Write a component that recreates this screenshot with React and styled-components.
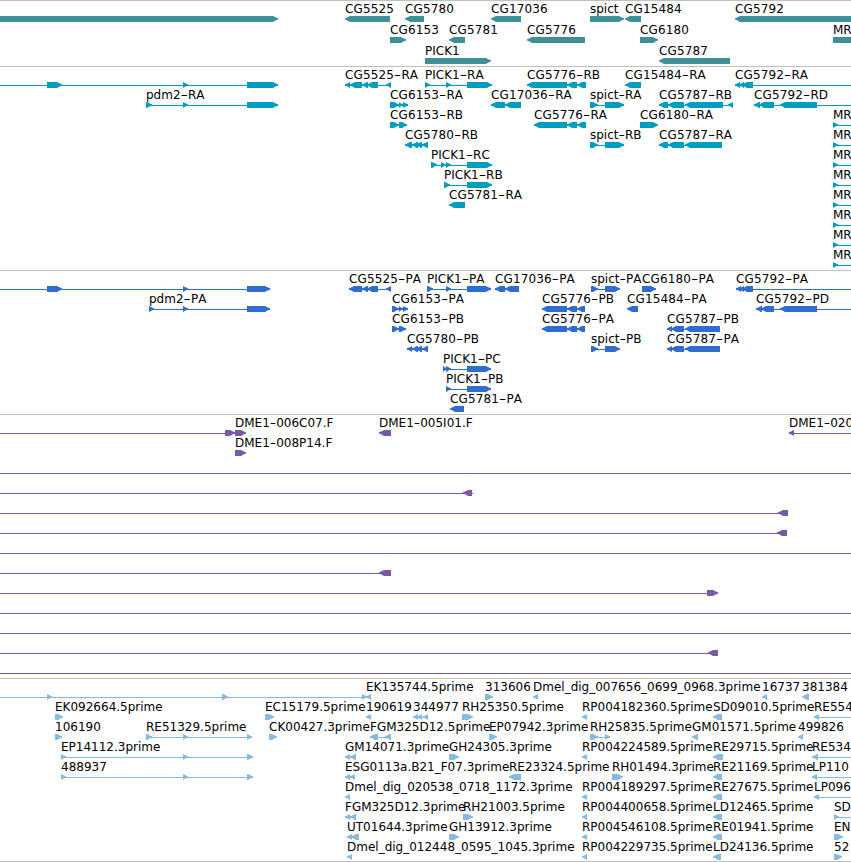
import React from 'react';
import styled, { createGlobalStyle } from 'styled-components';

const GlobalStyle = createGlobalStyle`
  body {
    margin: 0;
    background: #fff;
    overflow: hidden;
  }
`;

const Browser = styled.main`
  display: flex;
  flex-direction: column;
  width: 851px;
  overflow: hidden;
  border-bottom: 1px solid #c0c0c0;
`;

const Track = styled.section`
  display: flex;
  flex-direction: column;
  padding-bottom: ${props => props.$gap}px;
  border-top: 1px solid #c0c0c0;
  color: ${props => props.$color};
`;

const Lane = styled.svg`
  display: block;
  width: 100%;
  height: ${props => props.$height}px;
  overflow: visible;
`;

const Label = styled.text`
  fill: #000;
  font-family: 'DejaVu Sans', sans-serif;
  font-size: 12px;
  font-kerning: none;
  letter-spacing: ${props => props.$tracking}px;
`;

const Intron = styled.rect`
  fill: currentColor;
  shape-rendering: crispEdges;
`;

const Exon = styled.polygon`
  fill: currentColor;
`;

const END = 860;

// forward / reverse strand feature: label, exon ranges, optional intron line range
const fwd = (label, exons, line) => ({ label, exons, line, strand: 1 });
const rev = (label, exons, line) => ({ label, exons, line, strand: -1 });
const span = () => fwd('', [], [-10, END]);

const mr = () => fwd('MR', [[833, 838]], [833, END]);
const spict = (label, a, b) => fwd(label, [[a, 598], [605, b]], [a, b]);
const rp = label => rev(label, [[582, 587]]);

const tracks = [
  {
    name: 'genes',
    color: '#3f8f96',
    laneHeight: 21,
    gap: 2,
    lanes: [
      [
        fwd('', [[-10, 278]]),
        rev('CG5525', [[345, 390]]),
        rev('CG5780', [[405, 424]]),
        rev('CG17036', [[491, 521]]),
        fwd('spict', [[590, 624]]),
        rev('CG15484', [[625, 641]]),
        rev('CG5792', [[735, END]]),
      ],
      [
        fwd('CG6153', [[390, 406]]),
        rev('CG5781', [[449, 465]]),
        rev('CG5776', [[527, 585]]),
        fwd('CG6180', [[640, 658]]),
        fwd('MR', [[833, END]]),
      ],
      [fwd('PICK1', [[425, 491]]), rev('CG5787', [[659, 730]])],
    ],
  },
  {
    name: 'transcripts',
    color: '#009dc0',
    laneHeight: 20,
    gap: 3,
    lanes: [
      [
        fwd('', [[47, 62], [183, 188], [247, 278]], [-10, 278]),
        rev('CG5525-RA', [[345, 350], [350, 362], [362, 368], [367, 378], [386, 391]], [345, 391]),
        fwd('PICK1-RA', [[425, 430], [446, 451], [467, 492]], [425, 492]),
        rev('CG5776-RB', [[527, 567], [567, 577], [577, 586]], [527, 586]),
        rev('CG15484-RA', [[625, 641]]),
        rev('CG5792-RA', [[735, 740], [739, 744], [742, 753]], [735, END]),
      ],
      [
        fwd('pdm2-RA', [[146, 152], [183, 188], [247, 278]], [146, 278]),
        fwd('CG6153-RA', [[390, 399], [399, 403], [403, 408]], [390, 408]),
        rev('CG17036-RA', [[491, 505], [505, 521]], [491, 521]),
        spict('spict-RA', 590, 624),
        rev('CG5787-RB', [[659, 668], [668, 684], [685, 723], [728, 733]], [659, 733]),
        rev('CG5792-RD', [[754, 760], [759, 774], [780, 817]], [754, END]),
      ],
      [
        fwd('CG6153-RB', [[390, 399], [399, 407]], [390, 407]),
        rev('CG5776-RA', [[534, 567], [567, 577], [577, 586]], [534, 586]),
        fwd('CG6180-RA', [[640, 658]]),
        mr(),
      ],
      [
        rev('CG5780-RB', [[405, 412], [412, 418], [416, 422], [422, 428]], [405, 428]),
        spict('spict-RB', 590, 624),
        rev('CG5787-RA', [[659, 668], [668, 684], [685, 722]], [659, 722]),
        mr(),
      ],
      [fwd('PICK1-RC', [[431, 437], [441, 446], [446, 451], [467, 492]], [431, 492]), mr()],
      [fwd('PICK1-RB', [[444, 450], [467, 492]], [444, 492]), mr()],
      [rev('CG5781-RA', [[449, 465]]), mr()],
      [mr()],
      [mr()],
      [mr()],
    ],
  },
  {
    name: 'proteins',
    color: '#306ccf',
    laneHeight: 20,
    gap: 3,
    lanes: [
      [
        fwd('', [[47, 62], [183, 188], [247, 270]], [-10, 270]),
        rev('CG5525-PA', [[349, 362], [362, 368], [367, 378], [386, 391]], [349, 391]),
        fwd('PICK1-PA', [[427, 433], [446, 451], [467, 491]], [427, 491]),
        rev('CG17036-PA', [[495, 505], [505, 519]], [495, 519]),
        spict('spict-PA', 591, 620),
        fwd('CG6180-PA', [[642, 656]]),
        rev('CG5792-PA', [[736, 741], [739, 744], [742, 753]], [736, END]),
      ],
      [
        fwd('pdm2-PA', [[149, 154], [183, 188], [247, 270]], [149, 270]),
        fwd('CG6153-PA', [[392, 399], [399, 403], [403, 408]], [392, 408]),
        rev('CG5776-PB', [[542, 567], [567, 577], [577, 585]], [542, 585]),
        rev('CG15484-PA', [[627, 638]]),
        rev('CG5792-PD', [[756, 762], [761, 774], [780, 817]], [756, END]),
      ],
      [
        fwd('CG6153-PB', [[392, 399], [399, 406]], [392, 406]),
        rev('CG5776-PA', [[542, 567], [567, 577], [577, 585]], [542, 585]),
        rev('CG5787-PB', [[667, 672], [671, 684], [685, 720]], [667, 720]),
      ],
      [
        rev('CG5780-PB', [[407, 412], [412, 418], [416, 422], [422, 428]], [407, 428]),
        spict('spict-PB', 591, 620),
        rev('CG5787-PA', [[667, 672], [671, 684], [685, 720]], [667, 720]),
      ],
      [fwd('PICK1-PC', [[443, 447], [446, 451], [467, 491]], [443, 491])],
      [fwd('PICK1-PB', [[446, 451], [467, 491]], [446, 491])],
      [rev('CG5781-PA', [[450, 464]])],
    ],
  },
  {
    name: 'bac ends',
    color: '#7759a6',
    laneHeight: 20,
    gap: 3,
    lanes: [
      [
        fwd('', [[225, 235]], [-10, 235]),
        fwd('DME1-006C07.F', [[235, 246]]),
        rev('DME1-005I01.F', [[379, 391]]),
        rev('DME1-020', [[789, 794]], [789, END]),
      ],
      [fwd('DME1-008P14.F', [[235, 246]])],
      [span()],
      [rev('', [[463, 472]], [-10, 473])],
      [rev('', [[778, 788]], [-10, 788])],
      [rev('', [[777, 787]], [-10, 787])],
      [span()],
      [rev('', [[379, 391]], [-10, 391])],
      [fwd('', [[707, 718]], [-10, 718])],
      [span()],
      [span()],
      [rev('', [[708, 718]], [-10, 718])],
      [span()],
    ],
  },
  {
    name: 'ests',
    color: '#87bbdd',
    laneHeight: 20,
    gap: 2,
    lanes: [
      [
        fwd('', [[47, 52], [222, 228], [362, 367]], [-10, 367]),
        rev('EK135744.5prime', [[366, 371]]),
        fwd('313606', [[485, 493]]),
        rev('Dmel_dig_007656_0699_0968.3prime', [[533, 538]]),
        rev('16737', [[762, 767]]),
        rev('381384', [[802, 809]]),
      ],
      [
        fwd('EK092664.5prime', [[55, 63]]),
        fwd('EC15179.5prime', [[265, 274]]),
        rev('190619', [[366, 371]]),
        rev('344977', [[413, 418], [417, 422], [423, 428]], [413, 428]),
        fwd('RH25350.5prime', [[462, 473]]),
        rp('RP004182360.5prime'),
        rev('SD09010.5prime', [[713, 722]]),
        rev('RE554', [[814, 819]], [814, END]),
      ],
      [
        fwd('106190', [[55, 62]]),
        fwd('RE51329.5prime', [[146, 152], [183, 188], [247, 252]], [146, 252]),
        fwd('CK00427.3prime', [[269, 277]]),
        rev('FGM325D12.5prime', [[370, 378], [385, 391]], [370, 391]),
        fwd('EP07942.3prime', [[489, 497]]),
        fwd('RH25835.5prime', [[590, 598], [605, 610]], [590, 610]),
        rev('GM01571.5prime', [[692, 698]]),
        rev('499826', [[798, 803]]),
      ],
      [
        fwd('EP14112.3prime', [[61, 66], [183, 188], [247, 253]], [61, 253]),
        rev('GM14071.3prime', [[345, 350], [350, 356]], [345, 356]),
        fwd('GH24305.3prime', [[449, 459]]),
        rp('RP004224589.5prime'),
        rev('RE29715.5prime', [[713, 723]]),
        rev('RE534', [[812, 818]], [812, END]),
      ],
      [
        fwd('488937', [[61, 66], [183, 188], [247, 253]], [61, 253]),
        rev('ESG0113a.B21_F07.3prime', [[345, 350], [350, 355]], [345, 355]),
        rev('RE23324.5prime', [[509, 521]]),
        fwd('RH01494.3prime', [[612, 623]]),
        rev('RE21169.5prime', [[713, 722]]),
        rev('LP110', [[812, 817]], [812, END]),
      ],
      [
        rev('Dmel_dig_020538_0718_1172.3prime', [[345, 350]]),
        rp('RP004189297.5prime'),
        rev('RE27675.5prime', [[713, 722]]),
        rev('LP096', [[814, 819]], [814, END]),
      ],
      [
        rev('FGM325D12.3prime', [[345, 350], [350, 356]], [345, 356]),
        fwd('RH21003.5prime', [[463, 473]]),
        rp('RP004400658.5prime'),
        rev('LD12465.5prime', [[713, 722]]),
        fwd('SD2', [[834, 839]], [834, END]),
      ],
      [
        rev('UT01644.3prime', [[347, 352], [351, 359]], [347, 359]),
        fwd('GH13912.3prime', [[449, 459]]),
        rp('RP004546108.5prime'),
        rev('RE01941.5prime', [[713, 722]]),
        fwd('EN', [[834, 843]]),
      ],
      [
        rev('Dmel_dig_012448_0595_1045.3prime', [[347, 352]]),
        rp('RP004229735.5prime'),
        rev('LD24136.5prime', [[713, 721]]),
        fwd('52', [[834, 842]]),
      ],
    ],
  },
];

// box with a blunt arrow head on the strand's side; short boxes become a triangle
function exonPoints([a, b], strand) {
  const tip = strand > 0 ? b : a;
  const tail = strand > 0 ? a : b;
  const head = Math.min(5, b - a) * strand;
  const bulge = 2 * strand;
  return [
    [tail, 15],
    [tip - head, 15],
    [tip - bulge, 16.4],
    [tip, 17.3],
    [tip, 18.6],
    [tip - bulge, 19.2],
    [tip - head, 21],
    [tail, 21],
  ].join(' ');
}

function Feature({ label, exons, line, strand }) {
  const [first, ...rest] = label.split('-');
  const dashWidth = /^(DME|spict)/.test(label) ? 6.4 : 7.4;
  return (
    <g>
      {line && <Intron x={line[0]} y={18} width={line[1] - line[0]} height={1} />}
      {exons.map((exon, i) => (
        <Exon key={i} points={exonPoints(exon, strand)} />
      ))}
      {label && (
        <Label x={exons[0][0]} y={12} $tracking={label.startsWith('CG') ? 0.13 : 0}>
          {first}
          {rest.length > 0 && (
            <>
              <tspan textLength={dashWidth} lengthAdjust="spacingAndGlyphs">-</tspan>
              {rest.join('-')}
            </>
          )}
        </Label>
      )}
    </g>
  );
}

function App() {
  return (
    <>
      <GlobalStyle />
      <Browser>
        {tracks.map(track => (
          <Track key={track.name} $color={track.color} $gap={track.gap}>
            {track.lanes.map((lane, i) => (
              <Lane key={i} $height={track.laneHeight}>
                {lane.map((feature, j) => (
                  <Feature key={j} {...feature} />
                ))}
              </Lane>
            ))}
          </Track>
        ))}
      </Browser>
    </>
  );
}

export default App;
